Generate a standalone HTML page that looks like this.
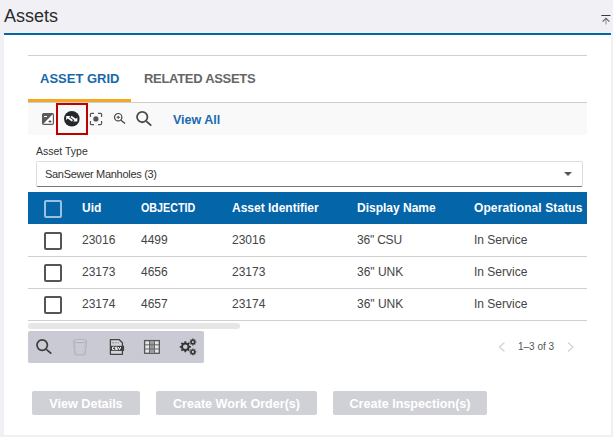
<!DOCTYPE html>
<html><head><meta charset="utf-8">
<style>
*{margin:0;padding:0;box-sizing:border-box}
html,body{width:613px;height:437px;overflow:hidden;background:#f1f0f5;font-family:"Liberation Sans",sans-serif}
.a{position:absolute;white-space:nowrap}
#title{left:4px;top:5px;font-size:18px;color:#2b2b2b;line-height:22px}
#panel{left:4px;top:33px;width:607px;height:402px;background:#fff;border-top:2px solid #0565a9}
.hl{background:#cfcfcf;height:1px}
.tab{font-weight:bold;font-size:13px;line-height:16px}
.th{color:#fff;font-weight:bold;font-size:12px;line-height:14px}
.td{color:#444;font-size:12px;line-height:14px}
.cb{width:18px;height:18px;border:2px solid #555;border-radius:2px}
.btn{background:#d0d1d6;border-radius:2px;height:24px;color:#fff;font-weight:bold;font-size:12.6px;line-height:26px;text-align:center}
</style></head><body>
<div class="a" id="title">Assets</div>
<svg class="a" style="left:600px;top:13px" width="12" height="14" viewBox="0 0 12 14">
<path d="M1.3 2.5H10.5" stroke="#3a3a3a" stroke-width="1"/>
<path d="M6 6V11.6" stroke="#aaa" stroke-width="1.4"/>
<path d="M2.6 8.6L6 5.4L9.4 8.6" stroke="#666" stroke-width="1.2" fill="none"/>
</svg>
<div class="a" id="panel"></div>
<div class="a hl" style="left:28px;top:55px;width:559px"></div>
<div class="a tab" style="left:40px;top:71px;color:#1867aa">ASSET GRID</div>
<div class="a tab" style="left:144px;top:71px;color:#666;letter-spacing:-0.3px">RELATED ASSETS</div>
<div class="a" style="left:28px;top:99px;width:103px;height:3px;background:#f5a623"></div>
<div class="a hl" style="left:28px;top:102px;width:559px"></div>
<div class="a" style="left:28px;top:103px;width:559px;height:32px;background:#f9f9f9"></div>
<div class="a" style="left:56px;top:103px;width:32px;height:32px;border:2px solid #c00000"></div>
<svg class="a" style="left:42px;top:113px" width="12" height="12" viewBox="0 0 12 12">
<rect x="0.6" y="0.6" width="10.8" height="10.8" rx="1.2" fill="#fff" stroke="#5a5a5a" stroke-width="1.2"/>
<path d="M0.6 1.8Q0.6 0.6 1.8 0.6H11.4L0.6 11.4Z" fill="#5a5a5a"/>
<rect x="2" y="3" width="3" height="1" fill="#fff"/>
<path d="M6.5 8.5H9.5M8 7V10" stroke="#5a5a5a" stroke-width="1"/>
</svg>
<svg class="a" style="left:62px;top:109px" width="20" height="20" viewBox="0 0 20 20">
<circle cx="9.8" cy="9.8" r="7.8" fill="#23272b"/>
<path d="M4.2 6.9H8.5L4.2 10.9Z" fill="#fff"/>
<path d="M5.2 8.1L10.4 11.7" stroke="#fff" stroke-width="1.8"/>
<path d="M15.3 12.6H11L15.3 8.6Z" fill="#fff"/>
<path d="M14.2 11.3L9.1 7.6" stroke="#fff" stroke-width="1.8"/>
</svg>
<svg class="a" style="left:88px;top:111px" width="16" height="16" viewBox="0 0 16 16">
<path d="M2.4 6V3.4Q2.4 2.4 3.4 2.4H6M10 2.4H12.6Q13.6 2.4 13.6 3.4V6M13.6 10V12.6Q13.6 13.6 12.6 13.6H10M6 13.6H3.4Q2.4 13.6 2.4 12.6V10" stroke="#555" stroke-width="1.2" fill="none"/>
<circle cx="7.9" cy="7.9" r="2.6" fill="#555"/>
</svg>
<svg class="a" style="left:110px;top:110px" width="18" height="18" viewBox="0 0 18 18">
<circle cx="8.2" cy="7.2" r="3.7" stroke="#444" stroke-width="1.2" fill="none"/>
<path d="M6.6 7.3H9.9M8.25 5.8V8.8" stroke="#444" stroke-width="1"/>
<path d="M11 10.2L15 13.6" stroke="#444" stroke-width="1.3"/>
</svg>
<svg class="a" style="left:133px;top:108px" width="22" height="22" viewBox="0 0 22 22">
<circle cx="9.25" cy="9.05" r="5.2" stroke="#4a4a4a" stroke-width="1.8" fill="none"/>
<path d="M13.3 13.3L18.3 17.6" stroke="#4a4a4a" stroke-width="1.8"/>
</svg>
<div class="a" style="left:173px;top:113px;font-size:12.5px;font-weight:bold;color:#1a6bb0">View All</div>
<div class="a" style="left:36px;top:145px;font-size:10.5px;color:#333">Asset Type</div>
<div class="a" style="left:36px;top:161px;width:547px;height:26px;border:1px solid #ddd;border-bottom:1px solid #777;border-radius:2px"></div>
<div class="a" style="left:45px;top:168px;font-size:11px;color:#333;letter-spacing:-0.3px">SanSewer Manholes (3)</div>
<div class="a" style="left:564px;top:172px;width:0;height:0;border-left:4px solid transparent;border-right:4px solid transparent;border-top:4px solid #555"></div>
<div class="a" style="left:28px;top:192px;width:559px;height:32px;background:#0565a9"></div>
<div class="a cb" style="left:44px;top:200px;border-color:#9cc0e0"></div>
<div class="a th" style="left:82px;top:201px">Uid</div>
<div class="a th" style="left:141px;top:201px;transform:scaleX(0.895);transform-origin:0 0">OBJECTID</div>
<div class="a th" style="left:232px;top:201px">Asset Identifier</div>
<div class="a th" style="left:357px;top:201px">Display Name</div>
<div class="a th" style="left:474px;top:201px;letter-spacing:0.1px">Operational Status</div>
<div class="a hl" style="left:28px;top:256px;width:559px"></div>
<div class="a hl" style="left:28px;top:288px;width:559px"></div>
<div class="a hl" style="left:28px;top:320px;width:559px"></div>
<div class="a cb" style="left:44px;top:232px"></div>
<div class="a cb" style="left:44px;top:264px"></div>
<div class="a cb" style="left:44px;top:296px"></div>
<div class="a td" style="left:82px;top:233px">23016</div>
<div class="a td" style="left:141px;top:233px">4499</div>
<div class="a td" style="left:232px;top:233px">23016</div>
<div class="a td" style="left:357px;top:233px;letter-spacing:-0.2px">36" CSU</div>
<div class="a td" style="left:474px;top:233px">In Service</div>
<div class="a td" style="left:82px;top:265px">23173</div>
<div class="a td" style="left:141px;top:265px">4656</div>
<div class="a td" style="left:232px;top:265px">23173</div>
<div class="a td" style="left:357px;top:265px">36" UNK</div>
<div class="a td" style="left:474px;top:265px">In Service</div>
<div class="a td" style="left:82px;top:297px">23174</div>
<div class="a td" style="left:141px;top:297px">4657</div>
<div class="a td" style="left:232px;top:297px">23174</div>
<div class="a td" style="left:357px;top:297px">36" UNK</div>
<div class="a td" style="left:474px;top:297px">In Service</div>
<div class="a" style="left:28px;top:323px;width:212px;height:6px;border-radius:3px;background:#e6e6e6"></div>
<div class="a" style="left:28px;top:331px;width:176px;height:32px;border-radius:2px;background:#c9cad3"></div>
<svg class="a" style="left:33px;top:336px" width="22" height="22" viewBox="0 0 22 22">
<circle cx="9.2" cy="9.1" r="5.2" stroke="#3c3c3c" stroke-width="1.7" fill="none"/>
<path d="M13.3 13.3L18.3 17.6" stroke="#3c3c3c" stroke-width="1.7"/>
</svg>
<svg class="a" style="left:70px;top:336px" width="20" height="22" viewBox="0 0 20 22">
<path d="M3.5 5L4.9 18.6Q5 19 5.5 19H14.5Q15 19 15.1 18.6L16.6 5" fill="#c3c5cc" stroke="#b1b3ba" stroke-width="1"/>
<ellipse cx="10" cy="5" rx="6.6" ry="1.6" fill="#cdcfd6" stroke="#b1b3ba" stroke-width="1"/>
<g fill="#d3d4da"><circle cx="7" cy="9" r="0.9"/><circle cx="10" cy="9" r="0.9"/><circle cx="13" cy="9" r="0.9"/>
<circle cx="8.5" cy="11.5" r="0.9"/><circle cx="11.5" cy="11.5" r="0.9"/>
<circle cx="7" cy="14" r="0.9"/><circle cx="10" cy="14" r="0.9"/><circle cx="13" cy="14" r="0.9"/>
<circle cx="8.5" cy="16.5" r="0.9"/><circle cx="11.5" cy="16.5" r="0.9"/></g>
</svg>
<svg class="a" style="left:106px;top:336px" width="22" height="22" viewBox="0 0 22 22">
<path d="M4.4 3.7H13.3L16.4 6.8V18.3H4.4Z" fill="#d5d6dc" stroke="#444" stroke-width="1.3" stroke-linejoin="round"/>
<path d="M6 6.8H8M8.8 6.8H10.5M11.5 6.8H13" stroke="#777" stroke-width="0.8"/>
<rect x="4.8" y="9.8" width="13.3" height="5.1" fill="#3e3e3e"/>
<path d="M8.4 11.2H6.6V13.6H8.4M11.4 11.2H9.4V12.4H11.3V13.6H9.3M12.3 11L13.5 13.7L14.7 11" stroke="#fff" stroke-width="1" fill="none"/>
</svg>
<svg class="a" style="left:141px;top:336px" width="22" height="22" viewBox="0 0 22 22">
<rect x="3.6" y="4.6" width="14.7" height="12.7" fill="#e4e5ea" stroke="#555" stroke-width="1.3"/>
<rect x="8.6" y="5.2" width="4.8" height="11.6" fill="#9a9ba0"/>
<path d="M4 8.8H18M4 13H18M8.5 5V17M13.5 5V17" stroke="#666" stroke-width="1"/>
</svg>
<svg class="a" style="left:177px;top:336px" width="22" height="22" viewBox="0 0 22 22">
<g fill="none" stroke="#333">
<circle cx="8.3" cy="10.8" r="3.3" stroke-width="2"/>
<circle cx="15.9" cy="6" r="1.8" stroke-width="1.4"/>
<circle cx="15.9" cy="15.9" r="1.8" stroke-width="1.4"/>
</g>
<g stroke="#333" stroke-width="1.8">
<path d="M8.3 5.3V7.2M8.3 14.4V16.3M2.8 10.8H4.7M11.9 10.8H13.8M4.4 6.9L5.8 8.3M10.8 13.3L12.2 14.7M4.4 14.7L5.8 13.3M10.8 8.3L12.2 6.9"/>
</g>
<g stroke="#333" stroke-width="1.2">
<path d="M15.9 2.6V3.9M15.9 8.1V9.4M12.5 6H13.8M18 6H19.3M13.5 3.6L14.4 4.5M17.4 7.5L18.3 8.4M13.5 8.4L14.4 7.5M17.4 4.5L18.3 3.6"/>
<path d="M15.9 12.5V13.8M15.9 18V19.3M12.5 15.9H13.8M18 15.9H19.3M13.5 13.5L14.4 14.4M17.4 17.4L18.3 18.3M13.5 18.3L14.4 17.4M17.4 14.4L18.3 13.5"/>
</g>
</svg>
<svg class="a" style="left:496px;top:340px" width="80" height="14" viewBox="0 0 80 14">
<path d="M8.5 2.5L3.5 7L8.5 11.5" stroke="#d4d4d8" stroke-width="1.3" fill="none"/>
<path d="M72 2.5L77 7L72 11.5" stroke="#d4d4d8" stroke-width="1.3" fill="none"/>
</svg>
<div class="a" style="left:518px;top:341px;font-size:10px;color:#555">1–3 of 3</div>
<div class="a btn" style="left:32px;top:391px;width:108px">View Details</div>
<div class="a btn" style="left:156px;top:391px;width:161px">Create Work Order(s)</div>
<div class="a btn" style="left:333px;top:391px;width:154px">Create Inspection(s)</div>
</body></html>
